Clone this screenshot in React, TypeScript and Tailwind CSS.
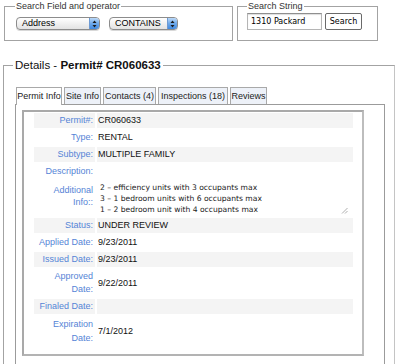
import React from "react";

const sans = { fontFamily: '"Liberation Sans", Arial, Helvetica, sans-serif' };
const lucida = { fontFamily: '"DejaVu Sans", Verdana, sans-serif' };

function Arrows() {
  return (
    <svg width="5" height="8" viewBox="0 0 5 8">
      <path d="M2.5 0.5 L4.5 3 L0.5 3 Z" fill="#1a1a1a" />
      <path d="M2.5 7.5 L4.5 5 L0.5 5 Z" fill="#1a1a1a" />
    </svg>
  );
}

function Select({ width, label }: { width: string; label: string }) {
  return (
    <div
      className={`${width} flex h-[13px] items-center rounded-[4px] border border-[#8c8c8c] bg-linear-to-b from-white to-[#e2e2e2] shadow-[0_1px_0_#d8d8d8]`}
    >
      <span className="flex-1 pl-[5px] text-[9px] leading-[11px] text-black">{label}</span>
      <span className="flex h-full w-[10px] items-center justify-center rounded-r-[3px] border-l border-[#6d9ad3] bg-linear-to-b from-[#bcd9f8] via-[#6ea9ea] to-[#3f89e0]">
        <Arrows />
      </span>
    </div>
  );
}

const tabs = [
  { name: "Permit Info", w: "w-[46px]", active: true },
  { name: "Site Info", w: "w-[37px]" },
  { name: "Contacts (4)", w: "w-[53px]" },
  { name: "Inspections (18)", w: "w-[70px]" },
  { name: "Reviews", w: "w-[37px]" },
];

type Row = { label: React.ReactNode; value?: React.ReactNode; bg?: boolean; h: string; kind?: string };

const rows: Row[] = [
  { label: "Permit#:", value: "CR060633", bg: true, h: "h-[15px]" },
  { label: "Type:", value: "RENTAL", h: "h-[15px]" },
  { label: "Subtype:", value: "MULTIPLE FAMILY", bg: true, h: "h-[15px]" },
  { label: "Description:", h: "h-[15px]" },
  { label: "Additional Info::", h: "h-[35px]", kind: "text" },
  { label: "Status:", value: "UNDER REVIEW", bg: true, h: "h-[15px]" },
  { label: "Applied Date:", value: "9/23/2011", h: "h-[15px]" },
  { label: "Issued Date:", value: "9/23/2011", bg: true, h: "h-[15px]" },
  { label: "Approved Date:", value: "9/22/2011", h: "h-[28px]", kind: "two" },
  { label: "Finaled Date:", bg: true, h: "h-[15px]" },
  { label: "Expiration Date:", value: "7/1/2012", h: "h-[30px]", kind: "two2" },
];

function Label({ row }: { row: Row }) {
  const text = String(row.label);
  if (row.kind === "text") {
    return (
      <div className="w-[61px] self-stretch pr-[2px] pt-[3px] text-right text-[9px] leading-[12px] text-[#5584d6]">
        Additional
        <br />
        Info::
      </div>
    );
  }
  if (row.kind === "two" || row.kind === "two2") {
    const [a, b] = text.split(" ");
    return (
      <div
        className={`w-[61px] pr-[2px] text-right text-[9px] text-[#5584d6] ${
          row.kind === "two" ? "leading-[13px]" : "leading-[14px]"
        }`}
      >
        {a}
        <br />
        {b}
      </div>
    );
  }
  return (
    <div className="w-[61px] whitespace-nowrap pr-[2px] text-right text-[9px] leading-[11px] text-[#5584d6]">
      {text}
    </div>
  );
}

export default function App() {
  return (
    <div className="h-[364px] w-[400px] overflow-hidden bg-white text-[#222]" style={sans}>
      <div className="flex">
        <fieldset className="ml-[4px] w-[229px] border border-[#a3a3a3] pb-[9px] pl-[11px] pt-[5px]">
          <legend className="-ml-[1px] px-[1px] text-[9px] leading-[12px] text-[#333]">
            Search Field and operator
          </legend>
          <div className="flex gap-[9px]">
            <Select width="w-[84px]" label="Address" />
            <Select width="w-[69px]" label="CONTAINS" />
          </div>
        </fieldset>
        <fieldset className="ml-[4px] w-[141px] border border-[#a3a3a3] pb-[10px] pl-[9px] pt-[1px]">
          <legend className="px-[1px] text-[9px] leading-[12px] text-[#333]">Search String</legend>
          <div className="flex gap-[3px]">
            <div
              className="flex h-[17px] w-[75px] items-center border border-[#b5b5b5] border-t-[#8f8f8f] pl-[3px] text-[8px] text-black shadow-[inset_0_1px_1px_#ddd]"
              style={lucida}
            >
              1310 Packard
            </div>
            <div
              className="flex h-[17px] w-[37px] items-center justify-center rounded-[2px] border border-[#6a6a6a] bg-white text-[8px] text-black"
              style={lucida}
            >
              Search
            </div>
          </div>
        </fieldset>
      </div>

      <fieldset className="ml-[3px] mt-[17px] w-[392px] border border-[#a3a3a3] border-r-[#c4c4c4] pl-[11px] pr-[9px] pt-[15px]">
        <legend className="-ml-[2px] px-[2px] text-[11.5px] leading-[14px] text-[#111]">
          Details - <b>Permit# CR060633</b>
        </legend>
        <div className="relative z-10 ml-[1px] flex items-end gap-[2px]">
          {tabs.map((t) => (
            <div
              key={t.name}
              className={`${t.w} flex items-center justify-center border border-b-0 border-[#a9a9a9] text-[9px] leading-[11px] text-[#222] ${
                t.active ? "-mb-px h-[18px] bg-white" : "h-[17px] bg-[#edf1f8]"
              }`}
            >
              {t.name}
            </div>
          ))}
        </div>
        <div className="h-[280px] border border-[#9b9b9b] pl-[6px] pt-[5px]">
          <div className="h-[246px] w-[342px] border-2 border-[#a9a9a9] border-r-[#bdbdbd] border-b-[#b3b3b3] pl-[10px] pt-px">
            <div className="flex w-[319px] flex-col gap-[2px]">
              {rows.map((r, i) => (
                <div key={i} className={`flex ${r.h} items-center gap-[2px]`}>
                  <div className={`flex h-full items-center justify-end ${r.bg ? "bg-[#f4f4f4]" : ""}`}>
                    <Label row={r} />
                  </div>
                  <div
                    className={`flex h-full flex-1 items-center pl-[1px] text-[9px] leading-[11px] text-[#111] ${
                      r.bg ? "bg-[#f4f4f4]" : ""
                    }`}
                  >
                    {r.kind === "text" ? (
                      <div
                        className="relative h-full w-[252px] pl-[2px] pt-px text-[7.6px] leading-[11px] text-[#222]"
                        style={lucida}
                      >
                        <div>2 – efficiency units with 3 occupants max</div>
                        <div>3 – 1 bedroom units with 6 occupants max</div>
                        <div>1 – 2 bedroom unit with 4 occupants max</div>
                        <svg
                          className="absolute bottom-[2px] right-[2px]"
                          width="7"
                          height="7"
                          viewBox="0 0 7 7"
                        >
                          <path d="M1 6.5 L6.5 1 M4 6.5 L6.5 4" stroke="#9a9a9a" strokeWidth="0.8" />
                        </svg>
                      </div>
                    ) : (
                      r.value
                    )}
                  </div>
                </div>
              ))}
            </div>
          </div>
        </div>
      </fieldset>
    </div>
  );
}
